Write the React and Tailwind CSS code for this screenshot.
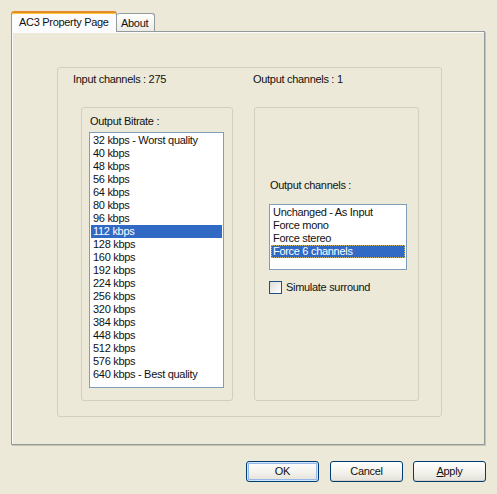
import React from "react";

const bitrates = [
  "32 kbps - Worst quality",
  "40 kbps",
  "48 kbps",
  "56 kbps",
  "64 kbps",
  "80 kbps",
  "96 kbps",
  "112 kbps",
  "128 kbps",
  "160 kbps",
  "192 kbps",
  "224 kbps",
  "256 kbps",
  "320 kbps",
  "384 kbps",
  "448 kbps",
  "512 kbps",
  "576 kbps",
  "640 kbps - Best quality",
];

const channels = ["Unchanged - As Input", "Force mono", "Force stereo", "Force 6 channels"];

function Button({ children, isDefault, className = "" }) {
  return (
    <div
      className={
        "w-[73px] h-[21px] rounded-[3px] border border-[#003C74] bg-gradient-to-b from-[#FFFFFF] via-[#F4F3EE] to-[#E3E1D8] flex items-center justify-center " +
        (isDefault ? "shadow-[inset_0_0_0_1px_#CEE7FF,inset_0_0_0_2px_#98B8EA] " : "shadow-[inset_0_-1px_0_#D6D0C5] ") +
        className
      }
    >
      {children}
    </div>
  );
}

export default function App() {
  return (
    <div className="w-[497px] h-[494px] bg-[#ECE9D8] pt-[11px] pl-[11px] text-[11px] leading-[13px] tracking-[-0.3px] text-[#111] font-['Liberation_Sans',Arial,sans-serif] overflow-hidden">
      {/* Tabs */}
      <div className="flex items-end h-[20px] relative z-10">
        <div className="w-[106px] h-[21px] -mb-px rounded-t-[3px] border-x border-t-2 border-[#919B9C] border-t-[#E68B2C] bg-[#FCFCFE] shadow-[inset_0_1px_0_#FFC73C] pt-[3px] pl-[7px] whitespace-nowrap">
          AC3 Property Page
        </div>
        <div className="w-[38px] h-[18px] rounded-t-[3px] border border-b-0 border-l-0 border-[#919B9C] bg-gradient-to-b from-[#FFFFFF] to-[#ECEBE6] pt-[3px] pl-[4px] whitespace-nowrap">
          About
        </div>
      </div>

      {/* Panel */}
      <div className="w-[474px] h-[414px] border border-[#919B9C] bg-[#ECE9D8] shadow-[inset_1px_1px_0_#FCFCFE,1px_1px_0_#C7C4B5] pt-[35px] pl-[45px]">
        <div className="w-[385px] h-[350px] border border-[#D0D0BF] rounded-[3px] pt-[5px]">
          <div className="flex">
            <div className="ml-[15px] w-[180px] whitespace-nowrap">Input channels : 275</div>
            <div className="whitespace-nowrap">Output channels : 1</div>
          </div>
          <div className="flex ml-[23px] mt-[21px] gap-[21px]">
            {/* Left group */}
            <div className="w-[152px] h-[294px] border border-[#D0D0BF] rounded-[3px] pt-[7px] pl-[7px]">
              <div className="ml-px whitespace-nowrap">Output Bitrate :</div>
              <div className="mt-[4px] w-[135px] h-[256px] border border-[#7F9DB9] bg-white p-px">
                {bitrates.map((b) => (
                  <div
                    key={b}
                    className={
                      "h-[13px] pl-[2px] whitespace-nowrap " +
                      (b === "112 kbps" ? "bg-[#316AC5] text-white" : "")
                    }
                  >
                    {b}
                  </div>
                ))}
              </div>
            </div>
            {/* Right group */}
            <div className="w-[165px] h-[294px] border border-[#D0D0BF] rounded-[3px] pt-[71px] pl-[14px]">
              <div className="ml-px whitespace-nowrap">Output channels :</div>
              <div className="mt-[12px] w-[138px] h-[66px] border border-[#7F9DB9] bg-white p-px">
                {channels.map((c) => (
                  <div
                    key={c}
                    className={
                      "h-[13px] pl-[2px] whitespace-nowrap " +
                      (c === "Force 6 channels"
                        ? "bg-[#316AC5] text-white outline-1 outline-dotted outline-[#C9B46A] -outline-offset-1"
                        : "")
                    }
                  >
                    {c}
                  </div>
                ))}
              </div>
              <div className="flex items-center mt-[11px] gap-[4px]">
                <div className="w-[13px] h-[13px] border border-[#1C5180] bg-gradient-to-br from-[#DCDCD7] to-[#FFFFFF]" />
                <div className="whitespace-nowrap">Simulate surround</div>
              </div>
            </div>
          </div>
        </div>
      </div>

      {/* Buttons */}
      <div className="flex mt-[16px] ml-[235px]">
        <Button isDefault>OK</Button>
        <Button className="ml-[11px]">Cancel</Button>
        <Button className="ml-[10px]">
          <span>
            <span className="underline">A</span>pply
          </span>
        </Button>
      </div>
    </div>
  );
}
